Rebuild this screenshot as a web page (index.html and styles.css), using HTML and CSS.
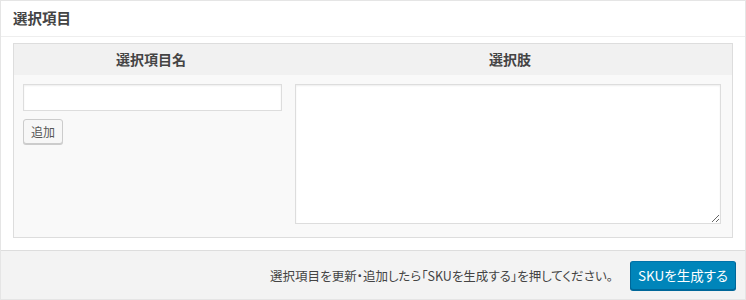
FILE: index.html
```html
<html>
    <head>
        <meta charset="utf-8">
        <title>選択項目</title>
        <link rel="stylesheet" href="styles.css">
    </head>
    <body>
        <div class="postbox">
            <h2 class="hndle">選択項目</h2>
            <div class="inside">
                <div class="opt-table">
                    <div class="opt-head">選択項目名</div>
                    <div class="opt-head">選択肢</div>
                    <div class="opt-cell name-cell">
                        <input class="opt-input" type="text">
                        <button class="button" type="button">追加</button>
                    </div>
                    <div class="opt-cell values-cell">
                        <textarea class="opt-values"></textarea>
                    </div>
                </div>
            </div>
            <div class="actions">
                <span class="note">選択項目を更新・追加したら「SKUを生成する」を押してください。</span>
                <button class="button button-primary" type="button">SKUを生成する</button>
            </div>
        </div>
    </body>
</html>
```

FILE: styles.css
```css
body {
    margin: 0;
    background: #fff;
    font-family: "Noto Sans CJK JP", "Noto Sans", sans-serif;
    font-feature-settings: "palt";
    color: #444;
}
.postbox {
    width: 746px;
    height: 300px;
    box-sizing: border-box;
    border: 1px solid #e5e5e5;
    display: flex;
    flex-direction: column;
}
.hndle {
    margin: 0;
    padding: 0 12px;
    height: 35px;
    line-height: 34px;
    font-size: 14.5px;
    font-weight: bold;
    color: #444;
    border-bottom: 1px solid #eee;
}
.inside {
    padding: 6px 12px 12px 12px;
}
.opt-table {
    display: grid;
    grid-template-columns: 274px 1fr;
    grid-template-rows: 31px 162px;
    border: 1px solid #ddd;
    background: #f9f9f9;
}
.opt-head {
    background: #f1f1f1;
    text-align: center;
    font-size: 14px;
    font-weight: bold;
    color: #444;
    line-height: 30px;
}
.opt-cell {
    padding: 9px;
}
.name-cell {
    display: flex;
    flex-direction: column;
    align-items: flex-start;
    gap: 8px;
}
.values-cell {
    padding: 9px 10px 0 7px;
}
.opt-input {
    width: 259px;
    height: 27px;
    box-sizing: border-box;
    border: 1px solid #ddd;
    box-shadow: inset 0 1px 2px rgba(0,0,0,0.07);
    background: #fff;
    outline: none;
}
.opt-values {
    width: 426px;
    height: 140px;
    box-sizing: border-box;
    border: 1px solid #ddd;
    box-shadow: inset 0 1px 2px rgba(0,0,0,0.07);
    background: #fff;
    display: block;
    outline: none;
}
.button {
    font-family: "Noto Sans CJK JP", "Noto Sans", sans-serif;
    font-feature-settings: "palt";
    height: 25px;
    padding: 0 7px;
    font-size: 12px;
    color: #555;
    background: #f7f7f7;
    border: 1px solid #ccc;
    border-radius: 3px;
    box-shadow: 0 1px 0 #ccc;
    cursor: pointer;
}
.actions {
    flex: 1;
    background: #f3f3f3;
    border-top: 1px solid #ddd;
    display: flex;
    justify-content: flex-end;
    align-items: center;
    padding: 0 9px 0 0;
    gap: 17px;
}
.note {
    font-size: 12.5px;
    color: #444;
}
.button-primary {
    height: 29px;
    padding: 0 7px;
    font-size: 13.5px;
    color: #fff;
    background: #0085ba;
    border-color: #0073aa #006799 #006799;
    box-shadow: 0 1px 0 #006799;
}
```
